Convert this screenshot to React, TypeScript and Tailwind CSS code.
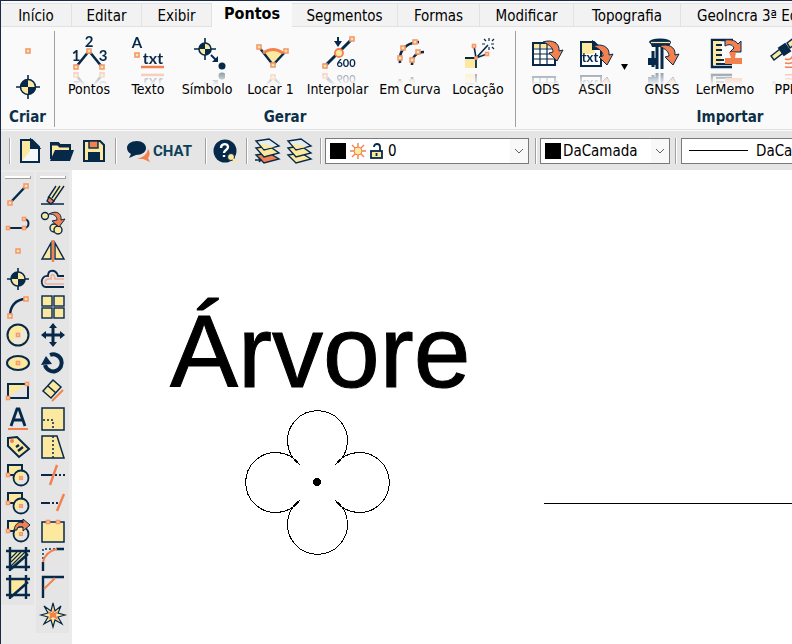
import React, { useState } from 'react';

const NAVY = '#06294a';
const ORANGE = '#f3814f';
const YELLOW = '#fde8a0';

type IconProps = { size?: number; children: React.ReactNode };

function Svg({ size = 24, children }: IconProps) {
  return (
    <svg
      width={size}
      height={size}
      viewBox={`0 0 ${size} ${size}`}
      fill="none"
      stroke={NAVY}
      strokeWidth="2"
      aria-hidden="true"
      className="shrink-0 overflow-visible"
    >
      {children}
    </svg>
  );
}

// small square handle used on almost every drawing icon
function Handle({ x, y, s = 4 }: { x: number; y: number; s?: number }) {
  return <rect x={x - s / 2} y={y - s / 2} width={s} height={s} fill={YELLOW} stroke="#f59a70" strokeWidth="1.6" />;
}

function Target({ x, y, r, arm }: { x: number; y: number; r: number; arm: number }) {
  return (
    <g>
      <path d={`M${x - arm} ${y}H${x + arm}M${x} ${y - arm}V${y + arm}`} strokeWidth="1.6" />
      <circle cx={x} cy={y} r={r} fill={YELLOW} stroke="none" />
      <path
        d={`M${x} ${y}V${y - r}A${r} ${r} 0 0 0 ${x - r} ${y}ZM${x} ${y}V${y + r}A${r} ${r} 0 0 0 ${x + r} ${y}Z`}
        fill={NAVY}
        stroke="none"
      />
      <circle cx={x} cy={y} r={r} strokeWidth="1.6" />
    </g>
  );
}

function CurvedArrow({ x, y }: { x: number; y: number }) {
  return (
    <path
      transform={`translate(${x} ${y})`}
      d="M-4 0C5 -3 13 1 12 9L16 8L10 19L2 11L6 10C6 6 3 3 -4 0Z"
      fill={ORANGE}
      strokeWidth="1"
    />
  );
}

function Glyphs({ x, y, size, children }: { x: number; y: number; size: number; children: string }) {
  return (
    <text x={x} y={y} fontSize={size} textAnchor="middle" fill={NAVY} stroke="none" fontWeight="700" fontFamily="Lato, sans-serif">
      {children}
    </text>
  );
}

const ribbonIcons = {
  points: (
    <>
      <path d="M5 32L18 16L31 32" strokeWidth="2.6" />
      <Handle x={5} y={32} />
      <Handle x={18} y={16} />
      <Handle x={31} y={32} />
      <Glyphs x={5} y={26} size={15}>1</Glyphs>
      <Glyphs x={18} y={12} size={15}>2</Glyphs>
      <Glyphs x={32} y={26} size={15}>3</Glyphs>
    </>
  ),
  text: (
    <>
      <Glyphs x={7} y={13} size={15}>A</Glyphs>
      <Handle x={7} y={20} />
      <Glyphs x={23} y={29} size={16}>txt</Glyphs>
      <path d="M11 32H34" stroke={ORANGE} strokeWidth="2.5" />
    </>
  ),
  symbol: (
    <>
      <Target x={16} y={14} r={6} arm={11} />
      <path d="M22 20L28 26" />
      <path d="M23 27H29V21Z" fill={NAVY} stroke="none" />
      <circle cx={33} cy={31} r={3.5} fill={NAVY} stroke="none" />
    </>
  ),
  stake: (
    <>
      <path d="M20 30L10 17Q20 11 30 17Z" fill={YELLOW} stroke="none" />
      <path d="M6 12L20 30L33 16" strokeWidth="2.4" />
      <path d="M10 18Q20 11 30 18" stroke={ORANGE} strokeWidth="3" />
      <Handle x={6} y={12} />
      <Handle x={33} y={16} />
      <Handle x={20} y={30} />
    </>
  ),
  interpolate: (
    <>
      <path d="M5 31L32 4" strokeWidth="3" />
      <path d="M18 2V8" />
      <path d="M14 6H22L18 12Z" fill={NAVY} stroke="none" />
      <Handle x={5} y={31} />
      <Handle x={32} y={4} />
      <circle cx={19} cy={18} r={4} fill={YELLOW} stroke={ORANGE} strokeWidth="1.8" />
      <Glyphs x={26} y={32} size={11}>600</Glyphs>
    </>
  ),
  curve: (
    <>
      <path d="M8 28C7 19 10 8 27 7M20 30C20 22 24 17 32 17" strokeWidth="2.6" />
      <Handle x={8} y={23} />
      <Handle x={11} y={13} />
      <Handle x={23} y={7} />
      <Handle x={20} y={25} />
      <Handle x={26} y={17} />
    </>
  ),
  location: (
    <>
      <rect x={5} y={24} width={11} height={9} fill={YELLOW} stroke="none" />
      <path d="M5 23H16V33" strokeWidth="1.8" />
      <path d="M14 11L16 23L27 19M17 22L28 10" strokeWidth="1.6" />
      <path d="M29 3V6M24 4L26 6M34 4L32 6M22 9H25M31 9H34M32 12L34 14M29 12V15" strokeWidth="1.2" />
      <Handle x={14} y={11} s={3} />
      <Handle x={27} y={19} s={3} />
      <Handle x={16} y={23} s={2} />
    </>
  ),
  ods: (
    <>
      <rect x={5} y={8} width={22} height={22} fill="#fff" />
      <rect x={6} y={9} width={20} height={4} fill={YELLOW} stroke="none" />
      <path d="M5 14H27M5 19H27M5 24H27M12 8V30M19 8V30" strokeWidth="1.2" />
      <CurvedArrow x={19} y={7} />
    </>
  ),
  ascii: (
    <>
      <path d="M4 7H17L24 14V31H4Z" fill="#fff" />
      <path d="M5 8H16L18 18L12 19H5Z" fill={YELLOW} stroke="none" />
      <path d="M16 7L24 14H16Z" fill={NAVY} />
      <CurvedArrow x={20} y={11} />
      <Glyphs x={13} y={27} size={13}>txt</Glyphs>
    </>
  ),
  gnss: (
    <>
      <ellipse cx={16} cy={7} rx={11} ry={3.5} fill={NAVY} stroke="none" />
      <path d="M6 7H27L25 12H8Z" fill={NAVY} stroke="none" />
      <path d="M7 7.5H26" stroke={YELLOW} strokeWidth="1.2" />
      <path d="M13 12V34M18 12V34" strokeWidth="3" />
      <rect x={4} y={23} width={10} height={7} fill={NAVY} stroke="none" />
      <path d="M9 16V32" strokeWidth="3" />
      <CurvedArrow x={19} y={11} />
    </>
  ),
  memo: (
    <>
      <path d="M26 5H5V32H25" strokeWidth="2.4" />
      <rect x={6} y={6} width={8} height={24} fill={YELLOW} stroke="none" />
      <path d="M9 10H15M9 15H15M9 20H15M9 25H17M9 29H25" strokeWidth="1.8" />
      <path d="M18 5C25 4 29 6 31 9L34 6V17H23L27 13C25 9 22 9 18 11Z" fill={ORANGE} strokeWidth="1" />
      <path d="M22 17H29L28 23H35V29H18V23H24Z" fill={ORANGE} stroke="none" />
    </>
  ),
  ppp: (
    <>
      <path d="M3 21L12 14L15 18L6 25ZM19 8L27 2L31 6L22 13Z" fill={YELLOW} strokeWidth="1.5" />
      <path d="M11 13L17 9L22 16L16 20Z" fill={NAVY} />
      <path d="M17 24Q23 26 25 20M17 28Q27 30 29 22M17 32Q31 34 33 24" stroke={ORANGE} strokeWidth="1.5" />
    </>
  ),
};

const drawTools: [string, React.ReactNode][] = [
  ['Linha', <><path d="M4 20L20 3" strokeWidth="2.4" /><Handle x={4} y={20} /><Handle x={20} y={3} /></>],
  ['Polilinha', <><path d="M2 17H18M18 8C24 8 24 17 18 17" /><Handle x={2} y={17} s={3} /><Handle x={18} y={17} s={3} /><Handle x={18} y={8} s={3} /></>],
  ['Ponto', <Handle x={12} y={12} />],
  ['Símbolo', <Target x={12} y={12} r={7} arm={11} />],
  ['Arco', <><path d="M4 21C4 12 9 4 20 4" strokeWidth="2.4" /><Handle x={4} y={21} /><Handle x={20} y={4} /></>],
  ['Círculo', <><circle cx={12} cy={12} r={10} fill={YELLOW} stroke="none" /><path d="M19 5A10 10 0 0 1 5 19Z" fill="#ece9dc" stroke="none" /><circle cx={12} cy={12} r={10.5} /><Handle x={12} y={12} s={3} /></>],
  ['Elipse', <><ellipse cx={12} cy={12} rx={11} ry={7} fill={YELLOW} /><Handle x={12} y={12} s={3} /></>],
  ['Retângulo', <><rect x={2} y={5} width={20} height={14} fill="#e5e5e5" /><path d="M3 6H20L3 17Z" fill={YELLOW} stroke="none" /><Handle x={2} y={19} s={3} /><Handle x={21} y={5} s={3} /></>],
  ['Texto', <><path d="M5 19L11 2H13L19 19M7 13H17" strokeWidth="2.8" /><path d="M2 22H22" stroke={ORANGE} /></>],
  ['Etiqueta', <><path d="M2 3L11 2L23 14L13 22L2 11Z" fill={YELLOW} /><circle cx={6} cy={6} r={2} fill={ORANGE} stroke="none" /><path d="M10 12L13 10M12 16L17 12" strokeWidth="2.4" /></>],
  ['Bloco', <Block />],
  ['Inserir bloco', <Block />],
  ['Exportar bloco', <><Block /><path d="M8 11C9 4 14 2 17 4V0L24 6L17 12V8C13 7 11 8 11 11Z" fill={ORANGE} strokeWidth="1" /></>],
  ['Hachura', <><Frame /><path d="M5 11L11 5M5 15L15 5M5 19L19 5M10 18L19 9" strokeWidth="1.2" /></>],
  ['Contorno', <Frame />],
];

const editTools: [string, React.ReactNode][] = [
  ['Apagar', <><path d="M8 15L16 3H23L13 19Z" fill={YELLOW} stroke="none" /><path d="M15 3L7 15M23 3L12 19M19 3L11 15M0 21H23" strokeWidth="1.4" /><path d="M8 14L13 18L10 21L6 18Z" fill={ORANGE} strokeWidth="1.4" /></>],
  ['Copiar', <><circle cx={4} cy={5} r={3.5} fill={YELLOW} strokeWidth="1.4" /><circle cx={13} cy={17} r={4} fill={YELLOW} strokeWidth="1.4" /><circle cx={17} cy={19} r={4} fill={YELLOW} strokeWidth="1.4" /><path d="M8 3C15 -1 21 2 20 9L24 8L18 16L11 10L16 9C16 5 13 3 8 3Z" fill={ORANGE} strokeWidth="1" /></>],
  ['Espelhar', <><path d="M10 4V20H1ZM14 4V20H23Z" fill={YELLOW} strokeWidth="1.4" /><path d="M12 1V23" stroke={ORANGE} strokeWidth="2.4" /></>],
  ['Paralela', <><path d="M23 9H17C15 2 7 2 7 9C-1 8 -1 20 5 20H23" strokeWidth="1.8" /><path d="M23 12H14C13 6 10 6 10 12C3 11 3 17 6 17H23" stroke="#eeb096" strokeWidth="1.6" /></>],
  ['Matriz', <g strokeWidth="1.4" fill={YELLOW}><rect x={1} y={1} width={10} height={10} /><rect x={13} y={1} width={10} height={10} /><rect x={1} y={13} width={10} height={10} /><rect x={13} y={13} width={10} height={10} /></g>],
  ['Mover', <><path d="M12 3V21M3 12H21" strokeWidth="3" /><path d="M12 0L16 5H8ZM12 24L8 19H16ZM0 12L5 8V16ZM24 12L19 16V8Z" fill={NAVY} stroke="none" /></>],
  ['Girar', <><path d="M9 4A8.5 8.5 0 1 1 4 14" strokeWidth="4" /><path d="M0 14L5 5L11 13Z" fill={NAVY} stroke="none" /></>],
  ['Alinhar', <><path d="M2 12L12 1L20 8L10 19Z" fill={YELLOW} strokeWidth="1.5" /><path d="M7 7L15 14" strokeWidth="1.5" /><path d="M11 22L22 11" stroke={ORANGE} /></>],
  ['Escala', <><rect x={1} y={1} width={22} height={22} fill={YELLOW} strokeWidth="1.5" /><path d="M2 13H12V22" strokeWidth="1.5" strokeDasharray="2 2" /></>],
  ['Esticar', <><path d="M1 1H16L23 23H1Z" fill={YELLOW} strokeWidth="1.5" /><path d="M12 1V23" strokeWidth="1.5" strokeDasharray="2 2" /></>],
  ['Aparar', <><path d="M0 12H12" /><path d="M14 12H24" strokeDasharray="2 2" /><path d="M16 2L9 22" stroke={ORANGE} strokeWidth="2.4" /></>],
  ['Estender', <><path d="M0 12H9" /><path d="M11 12H18" strokeDasharray="2 2" /><path d="M23 3L16 20" stroke={ORANGE} strokeWidth="2.4" /></>],
  ['Quebrar', <><rect x={1} y={3} width={22} height={20} fill={YELLOW} strokeWidth="1.5" /><Handle x={7} y={3} s={3} /><Handle x={17} y={3} s={3} /></>],
  ['Arredondar', <><path d="M2 24V15M15 2H23" strokeWidth="2.4" /><path d="M2 12V2H14" strokeWidth="1.4" strokeDasharray="2 2" /><path d="M2 15Q4 5 16 2" stroke={ORANGE} /></>],
  ['Chanfrar', <><path d="M2 23V2H23" strokeWidth="2.4" /><path d="M3 14L14 3" stroke={ORANGE} /></>],
  ['Explodir', <><path d="M12 0L14 8L20 3L17 10L24 12L17 14L21 21L14 17L12 24L10 17L3 21L7 14L0 12L7 10L3 3L10 8Z" fill={YELLOW} strokeWidth="1.2" /><path d="M12 6L13 10L17 8L15 12L17 17L12 14L8 17L9 12L7 8L11 10Z" fill={ORANGE} stroke="none" /></>],
];

function Block() {
  return (
    <>
      <rect x={2} y={2} width={14} height={10} fill={YELLOW} />
      <circle cx={15} cy={15} r={7} fill={YELLOW} stroke="none" />
      <path d="M20 10A7 7 0 0 1 10 20Z" fill="#e5e5e5" stroke="none" />
      <circle cx={15} cy={15} r={7.5} strokeWidth="1.8" />
      <Handle x={2} y={12} s={3} />
      <Handle x={15} y={15} s={2.5} />
    </>
  );
}

function Frame() {
  return (
    <>
      <rect x={4} y={4} width={16} height={16} fill={YELLOW} stroke="none" />
      <path d="M20 7V20H7Z" fill="#e5e5e5" stroke="none" />
      <path d="M0 4H24M0 20H24M4 0V24M20 0V24M5 22L22 7" strokeWidth="2.4" />
    </>
  );
}

function Layers({ active = false }: { active?: boolean }) {
  return (
    <Svg>
      <g strokeWidth="1.4">
        <path d="M1 16L14 14L24 20L9 24Z" fill={active ? ORANGE : YELLOW} />
        <path d="M1 9L14 7L24 14L9 18Z" fill={YELLOW} />
        <path d="M1 2L14 0L24 7L9 11Z" fill="#e3ecf0" />
        <path d="M4 4L20 8L9 10Z" fill={YELLOW} stroke="none" />
      </g>
      {active && <path d="M0 21H6M4 19L6 21L4 23" strokeWidth="1.4" />}
    </Svg>
  );
}

const tabs = [
  { name: 'Início', width: 'w-[71px]' },
  { name: 'Editar', width: 'w-[70px]' },
  { name: 'Exibir', width: 'w-[70px]' },
  { name: 'Pontos', width: 'w-[80px]' },
  { name: 'Segmentos', width: 'w-[106px]' },
  { name: 'Formas', width: 'w-[82px]' },
  { name: 'Modificar', width: 'w-[94px]' },
  { name: 'Topografia', width: 'w-[107px]' },
  { name: 'GeoIncra 3ª Edição', width: 'w-[162px]' },
];

function RibbonButton({ icon, label, width }: { icon: React.ReactNode; label: string; width: string }) {
  return (
    <button type="button" className={`flex shrink-0 flex-col items-center ${width}`}>
      <span className="[-webkit-box-reflect:below_0px_linear-gradient(transparent_60%,rgba(0,0,0,0.5))]">
        <Svg size={36}>{icon}</Svg>
      </span>
      <span className="mt-2 text-[14px] leading-5 whitespace-nowrap">{label}</span>
    </button>
  );
}

function GroupLabel({ children }: { children: string }) {
  return <h2 className="mt-auto text-center text-[15px] leading-5 font-bold text-[#0d3049]">{children}</h2>;
}

function Palette({ label, tools }: { label: string; tools: [string, React.ReactNode][] }) {
  return (
    <div role="toolbar" aria-label={label} className="flex w-[33px] flex-col items-center self-start bg-[#e5e5e5] pt-1 pb-1">
      <div className="h-[3px] w-[26px] border-r border-b border-[#a0a0a0] bg-white" />
      <div className="mt-0.5 flex flex-col">
        {tools.map(([name, icon]) => (
          <button key={name} type="button" title={name} aria-label={name} className="flex h-7 w-[33px] items-center justify-center">
            <Svg>{icon}</Svg>
          </button>
        ))}
      </div>
    </div>
  );
}

function Divider() {
  return <div className="h-[26px] w-0.5 shrink-0 border-l border-[#a0a0a0] bg-white" />;
}

function Chevron() {
  return (
    <span className="pointer-events-none absolute inset-y-px right-px flex w-[18px] items-center justify-center bg-[#f8f8f8]">
      <svg width="10" height="6" viewBox="0 0 10 6" fill="none" stroke="#606060" aria-hidden="true">
        <path d="M1 1L5 5L9 1" />
      </svg>
    </span>
  );
}

const selectClass = 'block h-[26px] w-full appearance-none border border-[#7a7a7a] bg-white text-[15px] leading-5 outline-none';

export default function App() {
  const [activeTab, setActiveTab] = useState('Pontos');

  return (
    <div className="flex min-h-screen w-full flex-col overflow-hidden border-t border-l border-[#1c2b45] bg-[#ebebeb] font-['DejaVu_Sans_Condensed','Noto_Sans',sans-serif] text-black">
      <nav role="tablist" className="flex items-end overflow-hidden bg-[#fafafa]">
        {tabs.map((tab) => (
          <button
            key={tab.name}
            type="button"
            role="tab"
            aria-selected={tab.name === activeTab}
            onClick={() => setActiveTab(tab.name)}
            className={`shrink-0 leading-5 whitespace-nowrap ${tab.width} ${
              tab.name === activeTab
                ? 'h-[26px] bg-[#fafafa] text-[16px] font-bold'
                : 'h-6 border-t border-r border-b border-[#e2e2e2] bg-[#f2f2f2] pt-0.5 text-[15px]'
            }`}
          >
            {tab.name}
          </button>
        ))}
      </nav>

      <section aria-label="Pontos" className="flex h-[103px] shrink-0 overflow-hidden border-b border-[#e0e0e0] bg-[#fafafa] pt-1 pb-0.5">
        <div className="flex w-[54px] shrink-0 flex-col items-center border-r border-[#a0a0a0]">
          <button type="button" aria-label="Ponto" className="mt-1">
            <Svg size={32}><Handle x={16} y={16} /></Svg>
          </button>
          <button type="button" aria-label="Símbolo" className="mt-1">
            <Svg size={32}><Target x={16} y={16} r={7.5} arm={12} /></Svg>
          </button>
          <GroupLabel>Criar</GroupLabel>
        </div>
        <div className="flex w-[461px] shrink-0 flex-col border-r border-[#a0a0a0] pt-1">
          <div className="flex pl-1">
            <RibbonButton icon={ribbonIcons.points} label="Pontos" width="w-[60px]" />
            <RibbonButton icon={ribbonIcons.text} label="Texto" width="w-[58px]" />
            <RibbonButton icon={ribbonIcons.symbol} label="Símbolo" width="w-[60px]" />
            <RibbonButton icon={ribbonIcons.stake} label="Locar 1" width="w-[67px]" />
            <RibbonButton icon={ribbonIcons.interpolate} label="Interpolar" width="w-[67px]" />
            <RibbonButton icon={ribbonIcons.curve} label="Em Curva" width="w-[78px]" />
            <RibbonButton icon={ribbonIcons.location} label="Locação" width="w-[58px]" />
          </div>
          <GroupLabel>Gerar</GroupLabel>
        </div>
        <div className="flex w-[428px] shrink-0 flex-col pt-1">
          <div className="flex pl-1.5">
            <RibbonButton icon={ribbonIcons.ods} label="ODS" width="w-12" />
            <RibbonButton icon={ribbonIcons.ascii} label="ASCII" width="w-[50px]" />
            <button type="button" aria-label="Mais formatos" className="flex w-2 items-center justify-center">
              <svg width="7" height="6" viewBox="0 0 7 6" aria-hidden="true">
                <path d="M0 0H7L3.5 6Z" />
              </svg>
            </button>
            <RibbonButton icon={ribbonIcons.gnss} label="GNSS" width="w-[68px]" />
            <RibbonButton icon={ribbonIcons.memo} label="LerMemo" width="w-[58px]" />
            <RibbonButton icon={ribbonIcons.ppp} label="PPP" width="w-16" />
          </div>
          <GroupLabel>Importar</GroupLabel>
        </div>
      </section>

      <div role="toolbar" aria-label="Arquivo" className="flex h-10 shrink-0 items-center overflow-hidden border-t border-[#fafafa] bg-[#e5e5e5] pl-2">
        <Divider />
        <div className="flex shrink-0 gap-2 pr-[9px] pl-[7px]">
          <button type="button" aria-label="Novo">
            <Svg>
              <path d="M3 1H14L21 8V23H3Z" fill="#f4f8fa" />
              <path d="M4 2H12V12L4 22Z" fill={YELLOW} stroke="none" />
              <path d="M13 1L21 9H13Z" fill={NAVY} />
            </Svg>
          </button>
          <button type="button" aria-label="Abrir">
            <Svg>
              <path d="M1 20V4H8L10 6H20V11" fill={YELLOW} />
              <path d="M1 5H8L10 7H20" strokeWidth="3" />
              <path d="M5 11H24L20 22H0Z" fill={NAVY} stroke="none" />
            </Svg>
          </button>
          <button type="button" aria-label="Salvar">
            <Svg>
              <path d="M2 2H18L22 6V22H2Z" fill={YELLOW} />
              <rect x={7} y={2} width={9} height={7} fill={ORANGE} strokeWidth="1.4" />
              <rect x={6} y={13} width={12} height={9} fill={NAVY} stroke="none" />
            </Svg>
          </button>
        </div>
        <Divider />
        <button
          type="button"
          className="flex w-[88px] shrink-0 items-center gap-0.5 pl-[10px] font-[Roboto,sans-serif] text-[15px] leading-6 font-bold text-[#0b4157]"
        >
          <Svg>
            <path d="M21 10C24 14 22 18 21 19L23 23L16 20L10 20C17 18 20 15 21 10Z" fill={ORANGE} stroke="none" />
            <path d="M10 2C4 2 0 5 0 9C0 12 2 14 4 15L2 19L9 16C15 16 19 13 19 9C19 5 15 2 10 2Z" fill={NAVY} stroke="none" />
          </Svg>
          CHAT
        </button>
        <Divider />
        <button type="button" aria-label="Ajuda" className="w-[39px] shrink-0 pl-1.5">
          <Svg>
            <circle cx={12} cy={12} r={11.5} fill={NAVY} stroke="none" />
            <path d="M8 9C8 4 15 4 15 8C15 11 11 11 11 14M11 16V18" stroke="#fff" strokeWidth="2.4" />
            <circle cx={18} cy={18} r={3.5} fill={YELLOW} strokeWidth="1" />
            <path d="M20 20L24 24" stroke={YELLOW} />
          </Svg>
        </button>
        <Divider />
        <div className="flex shrink-0 gap-2 pr-[9px] pl-[7px]">
          <button type="button" aria-label="Camada atual">
            <Layers active />
          </button>
          <button type="button" aria-label="Camadas">
            <Layers />
          </button>
        </div>
        <Divider />
        <label className="relative mr-1.5 ml-[3px] w-[204px] shrink-0">
          <span className="pointer-events-none absolute inset-y-0 left-[5px] flex items-center gap-1">
            <span className="size-4 bg-black" />
            <svg width="16" height="16" viewBox="0 0 16 16" stroke={ORANGE} strokeWidth="1.4" aria-hidden="true">
              <path d="M8 0V16M0 8H16M2 2L14 14M14 2L2 14" />
              <circle cx="8" cy="8" r="4" fill={YELLOW} strokeWidth="1" />
            </svg>
            <svg width="14" height="16" viewBox="0 0 14 16" stroke={NAVY} fill="none" strokeWidth="1.8" aria-hidden="true">
              <path d="M4 4C4 0 10 0 10 4V8" />
              <rect x="1" y="8" width="11" height="7" fill={YELLOW} />
              <path d="M6.5 10V13" />
            </svg>
          </span>
          <select aria-label="Camada" className={`${selectClass} pl-[62px]`}>
            <option>0</option>
          </select>
          <Chevron />
        </label>
        <Divider />
        <label className="relative mr-[5px] ml-[3px] w-[130px] shrink-0">
          <span className="pointer-events-none absolute inset-y-0 left-[5px] flex items-center">
            <span className="size-4 bg-black" />
          </span>
          <select aria-label="Cor" className={`${selectClass} pl-[22px]`}>
            <option>DaCamada</option>
          </select>
          <Chevron />
        </label>
        <Divider />
        <label className="relative ml-1 w-[204px] shrink-0">
          <span className="pointer-events-none absolute inset-y-0 left-2 flex items-center">
            <span className="h-px w-[59px] bg-black" />
          </span>
          <select aria-label="Tipo de linha" className={`${selectClass} pl-[74px]`}>
            <option>DaCamada</option>
          </select>
          <Chevron />
        </label>
      </div>

      <main className="flex flex-1">
        <div className="flex shrink-0 gap-0.5 pt-0.5 pr-[3px]">
          <Palette label="Desenho" tools={drawTools} />
          <Palette label="Edição" tools={editTools} />
        </div>
        <div className="relative flex-1 bg-white">
          <svg className="absolute inset-0 size-full" fill="none" stroke="#000" shapeRendering="crispEdges">
            <text x="98" y="217" fontSize="102" fill="#000" fontFamily="Liberation Sans, sans-serif">
              Árvore
            </text>
            <path d="M263 295A30 30 0 1 0 228 295M228 295A30 30 0 1 0 228 330M228 330A30 30 0 1 0 263 330M263 330A30 30 0 1 0 263 295" />
            <circle cx="245" cy="312" r="4" fill="#000" stroke="none" />
            <path d="M472 333.5H4000" />
          </svg>
        </div>
      </main>
    </div>
  );
}
